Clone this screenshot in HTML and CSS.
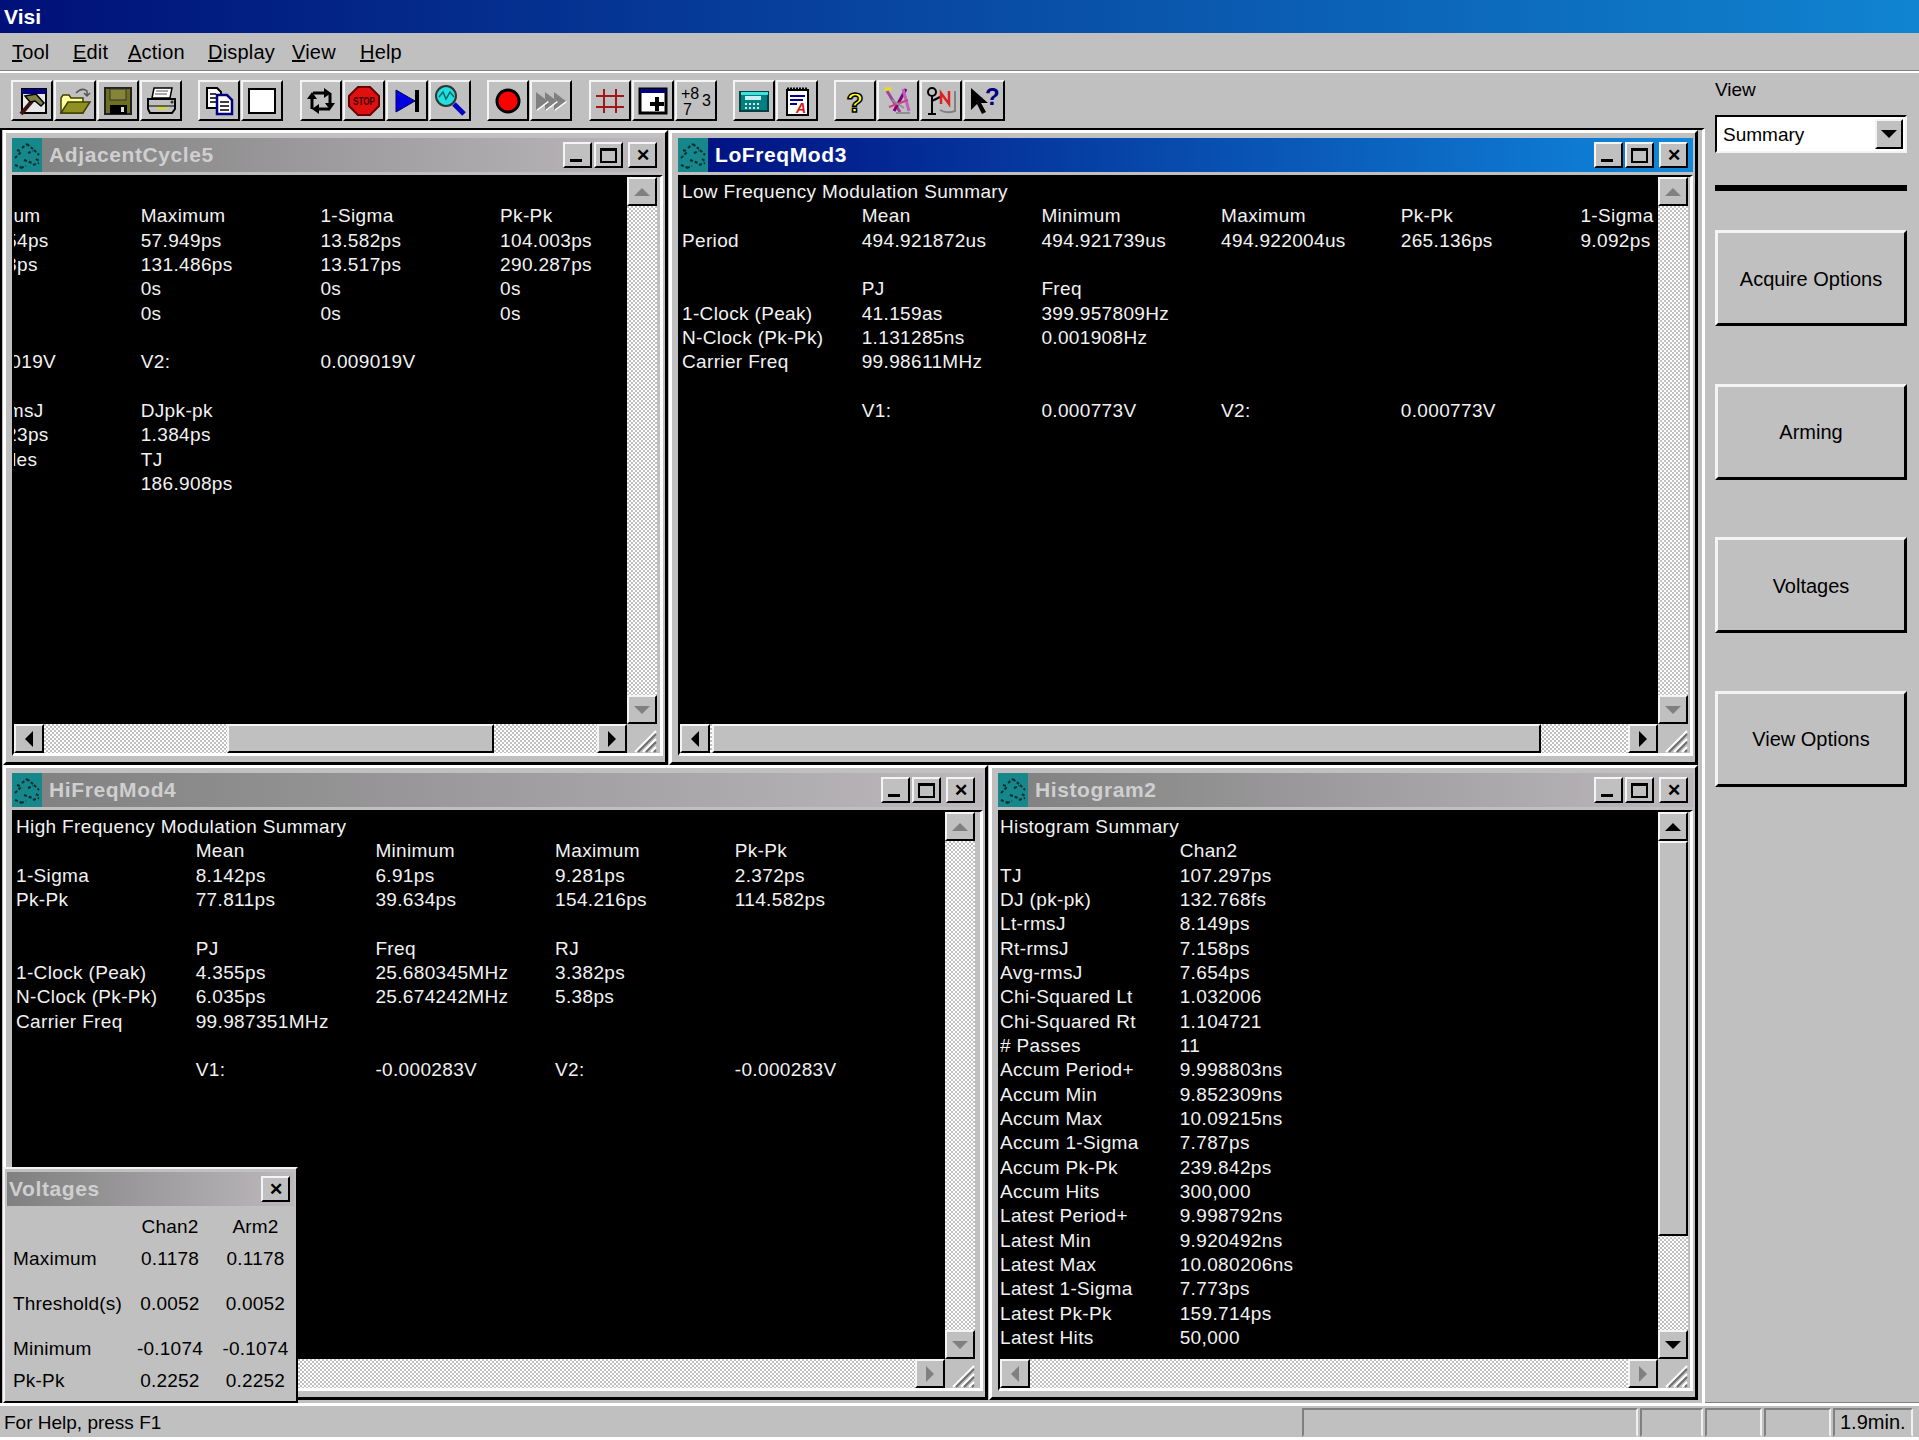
FILE: index.html
```html
<!DOCTYPE html>
<html lang="en">

<head>
    <meta charset="UTF-8">
    <title>Visi</title>
    <link rel="stylesheet" href="styles.css">
</head>

<body>
    <svg class="sprite">
        <symbol id="doc-icon" viewBox="0 0 30 34">
            <rect width="30" height="34" fill="#16878a"/>
            <path d="M3 20l6-6M10 10l5-4M15 6l6 5M22 12l5 5M3 27l7 3M12 22l8 3M21 27l6-2M5 12l3 1M16 15l5-2M24 21l3 2M9 30l5-2" stroke="#0a2c30" stroke-width="2" stroke-dasharray="3 2" fill="none"/>
        </symbol>
        <symbol id="grip" viewBox="0 0 30 29">
            <path d="M8 28L29 7M16 28L29 15M24 28L29 23" stroke="#fff" stroke-width="2"/>
            <path d="M11 28L29 10M19 28L29 18M27 28L29 26" stroke="#707070" stroke-width="2"/>
        </symbol>
    </svg>

    <div class="app">
        <div class="caption">Visi</div>

        <div class="menubar">
            <span class="menu-tool"><u>T</u>ool</span>
            <span class="menu-edit"><u>E</u>dit</span>
            <span class="menu-action"><u>A</u>ction</span>
            <span class="menu-display"><u>D</u>isplay</span>
            <span class="menu-view"><u>V</u>iew</span>
            <span class="menu-help"><u>H</u>elp</span>
        </div>

        <div class="workspace">
            <div class="left-col">
                <!-- toolbar -->
                <div class="toolbar">
                    <div class="tool-group">
                        <div class="tool-btn"><svg viewBox="0 0 32 30"><rect x="6" y="3" width="24" height="24" fill="#e8e8e8" stroke="#000" stroke-width="2"/><rect x="6" y="3" width="24" height="5" fill="#000080"/><path d="M17 14L5 28" stroke="#401010" stroke-width="4"/><path d="M9 10L20 8L28 17L25 20L19 15L14 16Z" fill="#808040" stroke="#000" stroke-width="1.5"/></svg></div>
                        <div class="tool-btn"><svg viewBox="0 0 32 30"><path d="M2 12V27H24V12H12L10 9H4Z" fill="#ffffa0" stroke="#404000" stroke-width="1.5"/><path d="M2 27L9 16H31L24 27Z" fill="#909020" stroke="#404000" stroke-width="1.5"/><path d="M17 7Q23 1 28 5V9M25 7L28 10L31 7" fill="none" stroke="#555" stroke-width="1.5"/></svg></div>
                        <div class="tool-btn"><svg viewBox="0 0 32 30"><path d="M3 2H29V28H3Z" fill="#6f6f20" stroke="#222" stroke-width="2"/><rect x="8" y="3" width="16" height="11" fill="#85853a" stroke="#333"/><rect x="8" y="19" width="17" height="9" fill="#000"/><rect x="19" y="21" width="3" height="5" fill="#ddd"/></svg></div>
                        <div class="tool-btn"><svg viewBox="0 0 32 30"><path d="M9 2H27L25 12H7Z" fill="#fff" stroke="#000" stroke-width="1.5"/><path d="M11 5H23M10 8H22" stroke="#555"/><path d="M3 13H30V23L27 27H5L3 23Z" fill="#c0c0c0" stroke="#000" stroke-width="2"/><path d="M4 20H29" stroke="#000"/><rect x="12" y="21" width="10" height="2" fill="#dd0"/><circle cx="27" cy="16" r="1.5" fill="#333"/></svg></div>
                    </div>
                    <div class="tool-group">
                        <div class="tool-btn"><svg viewBox="0 0 32 30"><path d="M4 2H14L18 6V22H4Z" fill="#fff" stroke="#000" stroke-width="2"/><path d="M7 8H13M7 12H13M7 16H13" stroke="#000" stroke-width="1.5"/><path d="M14 9H24L29 14V28H14Z" fill="#fff" stroke="#000080" stroke-width="2.5"/><path d="M17 16H26M17 20H26M17 24H26" stroke="#000" stroke-width="1.5"/></svg></div>
                        <div class="tool-btn"><svg viewBox="0 0 32 30"><rect x="3" y="3" width="26" height="24" fill="#fff" stroke="#000" stroke-width="2"/></svg></div>
                    </div>
                    <div class="tool-group">
                        <div class="tool-btn"><svg viewBox="0 0 32 30"><path d="M8 7H20M25 7V18M25 23H13M7 23V12" fill="none" stroke="#000" stroke-width="3"/><path d="M19 2L26 7L19 12ZM20 17L25 24L30 17ZM14 18L7 23L14 28ZM2 13L7 6L12 13Z"/></svg></div>
                        <div class="tool-btn"><svg viewBox="0 0 32 30"><polygon points="10,1 22,1 31,10 31,20 22,29 10,29 1,20 1,10" fill="#e01010" stroke="#600" stroke-width="2"/><text class="stop-label" x="16" y="19" textLength="22" lengthAdjust="spacingAndGlyphs">STOP</text></svg></div>
                        <div class="tool-btn"><svg viewBox="0 0 32 30"><polygon points="5,4 24,15 5,26" fill="#0000e0" stroke="#000060"/><rect x="24" y="4" width="4" height="22"/></svg></div>
                        <div class="tool-btn"><svg viewBox="0 0 32 30"><circle cx="12" cy="10" r="10" fill="#20e0e0" stroke="#333" stroke-width="2"/><path d="M5 11L9 6L12 13L16 6L20 11" fill="none" stroke="#066" stroke-width="1.5"/><path d="M20 18L30 28" stroke="#0000c0" stroke-width="5"/></svg></div>
                    </div>
                    <div class="tool-group">
                        <div class="tool-btn"><svg viewBox="0 0 32 30"><circle cx="16" cy="15" r="11" fill="#f00" stroke="#000" stroke-width="3"/></svg></div>
                        <div class="tool-btn"><svg viewBox="0 0 32 30"><path d="M20 7L32 16L20 25Z" fill="#fff"/><path d="M19 6L31 15L19 24Z" fill="#808080"/><path d="M11 7L23 16L11 25Z" fill="#fff"/><path d="M10 6L22 15L10 24Z" fill="#808080"/><path d="M2 7L14 16L2 25Z" fill="#fff"/><path d="M1 6L13 15L1 24Z" fill="#808080"/></svg></div>
                    </div>
                    <div class="tool-group">
                        <div class="tool-btn"><svg viewBox="0 0 32 30"><path d="M10 3V27M22 3V27M2 10H30M2 21H30" stroke="#a01818" stroke-width="2" fill="none"/></svg></div>
                        <div class="tool-btn"><svg viewBox="0 0 32 30"><rect x="3" y="3" width="26" height="24" fill="#fff" stroke="#000" stroke-width="3"/><rect x="3" y="3" width="26" height="4" fill="#000080"/><path d="M13 16H27V20H22V25H18V20H13ZM18 11H22V16H18Z"/></svg></div>
                        <div class="tool-btn"><svg viewBox="0 0 32 30"><text class="num-label" x="1" y="13">+8</text><text class="num-label" x="22" y="20">3</text><text class="num-label" x="3" y="29">7</text></svg></div>
                    </div>
                    <div class="tool-group">
                        <div class="tool-btn"><svg viewBox="0 0 32 30"><rect x="2" y="6" width="28" height="19" fill="#008080" stroke="#004040" stroke-width="2"/><path d="M3 6H30V9H3Z" fill="#40e0e0"/><rect x="7" y="10" width="16" height="4" fill="#c8f0f0"/><path d="M7 18H23M7 22H23" stroke="#e0e0e0" stroke-width="2" stroke-dasharray="2 2"/></svg></div>
                        <div class="tool-btn"><svg viewBox="0 0 32 30"><rect x="6" y="4" width="21" height="25" fill="#fff" stroke="#000" stroke-width="2"/><path d="M6 3H27" stroke="#000" stroke-width="3" stroke-dasharray="2 1"/><path d="M9 10H24M9 14H22M9 18H16" stroke="#000090" stroke-width="2"/><text class="note-label" x="15" y="27">A</text></svg></div>
                    </div>
                    <div class="tool-group">
                        <div class="tool-btn"><svg viewBox="0 0 32 30"><text class="help-label" x="16" y="26">?</text></svg></div>
                        <div class="tool-btn"><svg viewBox="0 0 32 30"><path d="M5 5L18 26" stroke="#a040a0" stroke-width="3"/><path d="M24 3L12 25" stroke="#800080" stroke-width="3"/><path d="M21 3L27 25" stroke="#c060c0" stroke-width="3"/><path d="M3 3H9" stroke="#f0e000" stroke-width="3"/><path d="M7 21L26 14" stroke="#d04080" stroke-width="2"/><path d="M10 14L22 22M14 27H28" stroke="#909090" stroke-width="2"/></svg></div>
                        <div class="tool-btn"><svg viewBox="0 0 32 30"><circle cx="7" cy="6" r="4" fill="none" stroke="#000" stroke-width="2"/><path d="M7 10V28M3 28H11M7 15L15 11" fill="none" stroke="#000" stroke-width="2"/><path d="M15 24Q21 28 30 25V5" fill="none" stroke="#808080" stroke-width="2"/><path d="M16 18V7L24 18V5" fill="none" stroke="#e02020" stroke-width="2.5"/></svg></div>
                        <div class="tool-btn"><svg viewBox="0 0 32 30"><polygon points="3,2 3,24 9,18 14,28 18,26 13,17 20,17"/><text class="what-label" x="17" y="19">?</text></svg></div>
                    </div>
                </div>

                <!-- MDI desktop -->
                <div class="mdi">
                    <div class="win win-adjacent">
                        <div class="title-bar inactive">
                            <svg class="title-icon"><use href="#doc-icon"/></svg>
                            <span class="title-text">AdjacentCycle5</span>
                            <div class="win-btn"><i class="glyph-min"></i></div>
                            <div class="win-btn"><i class="glyph-max"></i></div>
                            <div class="win-btn close">&#10005;</div>
                        </div>
                        <div class="client">
                            <div class="pane">
                                <div class="sheet scrolled">
                                    <div class="row"></div>
                                    <div class="row"><span>Minimum</span><span>Maximum</span><span>1-Sigma</span><span>Pk-Pk</span></div>
                                    <div class="row"><span>-46.054ps</span><span>57.949ps</span><span>13.582ps</span><span>104.003ps</span></div>
                                    <div class="row"><span>-158.8ps</span><span>131.486ps</span><span>13.517ps</span><span>290.287ps</span></div>
                                    <div class="row"><span></span><span>0s</span><span>0s</span><span>0s</span></div>
                                    <div class="row"><span></span><span>0s</span><span>0s</span><span>0s</span></div>
                                    <div class="row"></div>
                                    <div class="row"><span>0.009019V</span><span>V2:</span><span>0.009019V</span></div>
                                    <div class="row"></div>
                                    <div class="row"><span>Avg-rmsJ</span><span>DJpk-pk</span></div>
                                    <div class="row"><span>-10.623ps</span><span>1.384ps</span></div>
                                    <div class="row"><span>Samples</span><span>TJ</span></div>
                                    <div class="row"><span></span><span>186.908ps</span></div>
                                </div>
                            </div>
                            <div class="vscroll">
                                <div class="sb-btn"><i class="arr-up off"></i></div>
                                <div class="track"></div>
                                <div class="sb-btn"><i class="arr-down off"></i></div>
                            </div>
                            <div class="hscroll">
                                <div class="sb-btn"><i class="arr-left"></i></div>
                                <div class="track"><div class="thumb thumb-adjacent"></div></div>
                                <div class="sb-btn"><i class="arr-right"></i></div>
                            </div>
                            <div class="corner"><svg><use href="#grip"/></svg></div>
                        </div>
                    </div>

                    <div class="win win-lofreq">
                        <div class="title-bar">
                            <svg class="title-icon"><use href="#doc-icon"/></svg>
                            <span class="title-text">LoFreqMod3</span>
                            <div class="win-btn"><i class="glyph-min"></i></div>
                            <div class="win-btn"><i class="glyph-max"></i></div>
                            <div class="win-btn close">&#10005;</div>
                        </div>
                        <div class="client">
                            <div class="pane">
                                <div class="sheet">
                                    <div class="row"><span>Low Frequency Modulation Summary</span></div>
                                    <div class="row"><span></span><span>Mean</span><span>Minimum</span><span>Maximum</span><span>Pk-Pk</span><span>1-Sigma</span></div>
                                    <div class="row"><span>Period</span><span>494.921872us</span><span>494.921739us</span><span>494.922004us</span><span>265.136ps</span><span>9.092ps</span></div>
                                    <div class="row"></div>
                                    <div class="row"><span></span><span>PJ</span><span>Freq</span></div>
                                    <div class="row"><span>1-Clock (Peak)</span><span>41.159as</span><span>399.957809Hz</span></div>
                                    <div class="row"><span>N-Clock (Pk-Pk)</span><span>1.131285ns</span><span>0.001908Hz</span></div>
                                    <div class="row"><span>Carrier Freq</span><span>99.98611MHz</span></div>
                                    <div class="row"></div>
                                    <div class="row"><span></span><span>V1:</span><span>0.000773V</span><span>V2:</span><span>0.000773V</span></div>
                                </div>
                            </div>
                            <div class="vscroll">
                                <div class="sb-btn"><i class="arr-up off"></i></div>
                                <div class="track"></div>
                                <div class="sb-btn"><i class="arr-down off"></i></div>
                            </div>
                            <div class="hscroll">
                                <div class="sb-btn"><i class="arr-left"></i></div>
                                <div class="track"><div class="thumb thumb-lofreq"></div></div>
                                <div class="sb-btn"><i class="arr-right"></i></div>
                            </div>
                            <div class="corner"><svg><use href="#grip"/></svg></div>
                        </div>
                    </div>

                    <div class="win win-hifreq">
                        <div class="title-bar inactive">
                            <svg class="title-icon"><use href="#doc-icon"/></svg>
                            <span class="title-text">HiFreqMod4</span>
                            <div class="win-btn"><i class="glyph-min"></i></div>
                            <div class="win-btn"><i class="glyph-max"></i></div>
                            <div class="win-btn close">&#10005;</div>
                        </div>
                        <div class="client">
                            <div class="pane">
                                <div class="sheet">
                                    <div class="row"><span>High Frequency Modulation Summary</span></div>
                                    <div class="row"><span></span><span>Mean</span><span>Minimum</span><span>Maximum</span><span>Pk-Pk</span></div>
                                    <div class="row"><span>1-Sigma</span><span>8.142ps</span><span>6.91ps</span><span>9.281ps</span><span>2.372ps</span></div>
                                    <div class="row"><span>Pk-Pk</span><span>77.811ps</span><span>39.634ps</span><span>154.216ps</span><span>114.582ps</span></div>
                                    <div class="row"></div>
                                    <div class="row"><span></span><span>PJ</span><span>Freq</span><span>RJ</span></div>
                                    <div class="row"><span>1-Clock (Peak)</span><span>4.355ps</span><span>25.680345MHz</span><span>3.382ps</span></div>
                                    <div class="row"><span>N-Clock (Pk-Pk)</span><span>6.035ps</span><span>25.674242MHz</span><span>5.38ps</span></div>
                                    <div class="row"><span>Carrier Freq</span><span>99.987351MHz</span></div>
                                    <div class="row"></div>
                                    <div class="row"><span></span><span>V1:</span><span>-0.000283V</span><span>V2:</span><span>-0.000283V</span></div>
                                </div>
                            </div>
                            <div class="vscroll">
                                <div class="sb-btn"><i class="arr-up off"></i></div>
                                <div class="track"></div>
                                <div class="sb-btn"><i class="arr-down off"></i></div>
                            </div>
                            <div class="hscroll">
                                <div class="track"></div>
                                <div class="sb-btn"><i class="arr-right off"></i></div>
                            </div>
                            <div class="corner"><svg><use href="#grip"/></svg></div>
                        </div>
                    </div>

                    <div class="win win-histogram">
                        <div class="title-bar inactive">
                            <svg class="title-icon"><use href="#doc-icon"/></svg>
                            <span class="title-text">Histogram2</span>
                            <div class="win-btn"><i class="glyph-min"></i></div>
                            <div class="win-btn"><i class="glyph-max"></i></div>
                            <div class="win-btn close">&#10005;</div>
                        </div>
                        <div class="client">
                            <div class="pane">
                                <div class="sheet">
                                    <div class="row"><span>Histogram Summary</span></div>
                                    <div class="row"><span></span><span>Chan2</span></div>
                                    <div class="row"><span>TJ</span><span>107.297ps</span></div>
                                    <div class="row"><span>DJ (pk-pk)</span><span>132.768fs</span></div>
                                    <div class="row"><span>Lt-rmsJ</span><span>8.149ps</span></div>
                                    <div class="row"><span>Rt-rmsJ</span><span>7.158ps</span></div>
                                    <div class="row"><span>Avg-rmsJ</span><span>7.654ps</span></div>
                                    <div class="row"><span>Chi-Squared Lt</span><span>1.032006</span></div>
                                    <div class="row"><span>Chi-Squared Rt</span><span>1.104721</span></div>
                                    <div class="row"><span># Passes</span><span>11</span></div>
                                    <div class="row"><span>Accum Period+</span><span>9.998803ns</span></div>
                                    <div class="row"><span>Accum Min</span><span>9.852309ns</span></div>
                                    <div class="row"><span>Accum Max</span><span>10.09215ns</span></div>
                                    <div class="row"><span>Accum 1-Sigma</span><span>7.787ps</span></div>
                                    <div class="row"><span>Accum Pk-Pk</span><span>239.842ps</span></div>
                                    <div class="row"><span>Accum Hits</span><span>300,000</span></div>
                                    <div class="row"><span>Latest Period+</span><span>9.998792ns</span></div>
                                    <div class="row"><span>Latest Min</span><span>9.920492ns</span></div>
                                    <div class="row"><span>Latest Max</span><span>10.080206ns</span></div>
                                    <div class="row"><span>Latest 1-Sigma</span><span>7.773ps</span></div>
                                    <div class="row"><span>Latest Pk-Pk</span><span>159.714ps</span></div>
                                    <div class="row"><span>Latest Hits</span><span>50,000</span></div>
                                </div>
                            </div>
                            <div class="vscroll">
                                <div class="sb-btn"><i class="arr-up"></i></div>
                                <div class="track"><div class="thumb thumb-histogram"></div></div>
                                <div class="sb-btn"><i class="arr-down"></i></div>
                            </div>
                            <div class="hscroll">
                                <div class="sb-btn"><i class="arr-left off"></i></div>
                                <div class="track"></div>
                                <div class="sb-btn"><i class="arr-right off"></i></div>
                            </div>
                            <div class="corner"><svg><use href="#grip"/></svg></div>
                        </div>
                    </div>

                    <!-- floating voltages palette -->
                    <div class="palette">
                        <div class="title-bar inactive palette-title">
                            <span class="title-text">Voltages</span>
                            <div class="win-btn close">&#10005;</div>
                        </div>
                        <div class="volt-grid">
                            <span></span><span class="volt-val">Chan2</span><span class="volt-val">Arm2</span>
                            <span>Maximum</span><span class="volt-val">0.1178</span><span class="volt-val">0.1178</span>
                            <span>Threshold(s)</span><span class="volt-val">0.0052</span><span class="volt-val">0.0052</span>
                            <span>Minimum</span><span class="volt-val">-0.1074</span><span class="volt-val">-0.1074</span>
                            <span>Pk-Pk</span><span class="volt-val">0.2252</span><span class="volt-val">0.2252</span>
                        </div>
                    </div>
                </div>
            </div>

            <!-- right side panel -->
            <div class="side">
                <div class="side-label">View</div>
                <div class="combo">
                    <span class="combo-text">Summary</span>
                    <div class="combo-btn"><i class="arr-down"></i></div>
                </div>
                <div class="side-rule"></div>
                <div class="side-btn">Acquire Options</div>
                <div class="side-btn">Arming</div>
                <div class="side-btn">Voltages</div>
                <div class="side-btn">View Options</div>
            </div>
        </div>

        <div class="status">
            <span class="status-text">For Help, press F1</span>
            <div class="status-cell cell-a"></div>
            <div class="status-cell cell-b"></div>
            <div class="status-cell cell-c"></div>
            <div class="status-cell cell-d"></div>
            <div class="status-cell cell-e">1.9min.</div>
        </div>
    </div>
</body>

</html>
```

FILE: styles.css
```css
/* base */
* {
    box-sizing: border-box;
}

body {
    margin: 0;
    background: #c0c0c0;
    font-family: "Liberation Sans", Arial, sans-serif;
    font-size: 19px;
    color: #000;
}

.sprite {
    position: absolute;
    width: 0;
    height: 0;
}

.app {
    width: 1919px;
    height: 1440px;
    display: flex;
    flex-direction: column;
    overflow: hidden;
}

/* caption + menu */
.caption {
    height: 33px;
    padding-left: 4px;
    line-height: 33px;
    font-size: 21px;
    font-weight: bold;
    color: #fff;
    background: linear-gradient(90deg, #001078, #1084d0);
}

.menubar {
    height: 40px;
    display: flex;
    align-items: center;
    font-size: 20px;
    letter-spacing: 0.2px;
    padding: 1px 0 0 12px;
    border-bottom: 2px solid #fff;
    box-shadow: inset 0 -1px 0 #808080;
}

.menu-tool { width: 61px; }
.menu-edit { width: 55px; }
.menu-action { width: 80px; }
.menu-display { width: 84px; }
.menu-view { width: 68px; }

.workspace {
    flex: 1;
    display: flex;
    min-height: 0;
}

.left-col {
    width: 1705px;
    display: flex;
    flex-direction: column;
}

/* toolbar */
.toolbar {
    height: 55px;
    display: flex;
    gap: 16.4px;
    padding: 7px 0 0 11px;
}

.tool-group {
    display: flex;
    gap: 1px;
}

.tool-btn {
    width: 42px;
    height: 41px;
    display: flex;
    align-items: center;
    justify-content: center;
    border: 2px solid;
    border-color: #f4f4f4 #000 #000 #f4f4f4;
}

.tool-btn svg {
    width: 32px;
    height: 30px;
    overflow: visible;
}

.tool-btn text {
    font-family: "Liberation Sans", sans-serif;
}

.stop-label {
    font-size: 10px;
    font-weight: bold;
    text-anchor: middle;
    fill: #300;
}

.num-label {
    font-size: 16px;
}

.note-label {
    font-size: 14px;
    font-weight: bold;
    font-style: italic;
    fill: #e01010;
}

.help-label {
    font-size: 28px;
    font-weight: bold;
    text-anchor: middle;
    fill: #ffff20;
    stroke: #000;
    stroke-width: 1.5px;
}

.what-label {
    font-size: 24px;
    font-weight: bold;
    fill: #000080;
}

/* MDI */
.mdi {
    position: relative;
    flex: 1;
    background: #c0c0c0;
    border-top: 2px solid #000;
    border-left: 2px solid #000;
    border-right: 3px solid #fff;
}

.win {
    position: absolute;
    display: flex;
    flex-direction: column;
    background: #c0c0c0;
    border: 3px solid;
    border-color: #fff #000 #000 #fff;
    padding: 5px 2px 6px 6px;
}

.win-adjacent { left: 1px; top: 0; width: 665px; height: 635px; }
.win-lofreq { left: 667px; top: 0; width: 1029px; height: 635px; }
.win-hifreq { left: 1px; top: 635px; width: 985px; height: 635px; }
.win-histogram { left: 987px; top: 635px; width: 709px; height: 635px; }

.title-bar {
    height: 34px;
    margin-bottom: 3px;
    display: flex;
    align-items: center;
    padding-right: 5px;
    gap: 2px;
    color: #fff;
    background: linear-gradient(90deg, #000f80, #1088dc);
}

.title-bar.inactive {
    color: #cfcfcf;
    background: linear-gradient(90deg, #808080, #bcb8bc);
}

.win-adjacent .title-bar { padding-right: 6px; }
.win-hifreq .title-bar { padding-right: 8px; }

.title-icon {
    width: 30px;
    height: 34px;
    flex: none;
}

.title-text {
    flex: 1;
    padding-left: 5px;
    font-size: 21px;
    font-weight: bold;
    letter-spacing: 0.6px;
    white-space: nowrap;
}

.win-btn {
    width: 29px;
    height: 26px;
    flex: none;
    display: flex;
    align-items: center;
    justify-content: center;
    background: #c0c0c0;
    color: #000;
    border: 2px solid;
    border-color: #f4f4f4 #000 #000 #f4f4f4;
    font-size: 17px;
    font-weight: bold;
    line-height: 1;
}

.win-btn.close {
    margin-left: 3px;
}

.glyph-min {
    width: 12px;
    height: 3px;
    background: #000;
    margin-top: 11px;
    margin-right: 4px;
}

.glyph-max {
    width: 17px;
    height: 15px;
    border: 2px solid #000;
    border-top-width: 3px;
}

.client {
    flex: 1;
    min-height: 0;
    display: grid;
    grid-template-columns: minmax(0, 1fr) 30px;
    grid-template-rows: minmax(0, 1fr) 29px;
    border: 2px solid;
    border-color: #000 #fff #fff #000;
    border-right-width: 3px;
    border-bottom-width: 3px;
    padding-right: 2px;
}

.win-adjacent .client { padding-right: 3px; }
.win-hifreq .client { padding-right: 5px; }

.pane {
    background: #000;
    overflow: hidden;
    color: #f2f2f2;
    padding: 3px 0 0 2px;
    letter-spacing: 0.35px;
}

.win-histogram .pane {
    padding-left: 0;
}

.sheet.scrolled {
    margin-left: -55px;
}

.row {
    height: 24.33px;
    line-height: 24.33px;
    display: grid;
    grid-template-columns: repeat(6, 179.7px);
    white-space: nowrap;
}

/* scrollbars */
.vscroll {
    display: flex;
    flex-direction: column;
}

.hscroll {
    display: flex;
}

.track {
    flex: 1;
    min-width: 0;
    background: conic-gradient(#fff 25%, #c0c0c0 0 50%, #fff 0 75%, #c0c0c0 0) 0 0 / 4px 4px;
}

.sb-btn {
    flex: none;
    width: 30px;
    height: 29px;
    display: flex;
    align-items: center;
    justify-content: center;
    background: #c0c0c0;
    border: 2px solid;
    border-color: #f4f4f4 #000 #000 #f4f4f4;
}

.thumb {
    background: #c0c0c0;
    border: 2px solid;
    border-color: #f4f4f4 #000 #000 #f4f4f4;
}

.thumb-adjacent { width: 267px; height: 29px; margin-left: 183px; }
.thumb-lofreq { width: 829px; height: 29px; margin-left: 2px; }
.thumb-histogram { width: 30px; height: 395px; }

.arr-up, .arr-down, .arr-left, .arr-right {
    display: block;
    width: 0;
    height: 0;
    border: 0 solid transparent;
}

.arr-up { border-width: 0 8px 8px; border-bottom-color: #000; }
.arr-down { border-width: 8px 8px 0; border-top-color: #000; }
.arr-left { border-width: 8px 8px 8px 0; border-right-color: #000; }
.arr-right { border-width: 8px 0 8px 8px; border-left-color: #000; }

.arr-up.off { border-bottom-color: #808080; }
.arr-down.off { border-top-color: #808080; }
.arr-left.off { border-right-color: #808080; }
.arr-right.off { border-left-color: #808080; }

.corner {
    background: #c0c0c0;
    overflow: hidden;
}

.corner svg {
    display: block;
    width: 30px;
    height: 29px;
}

/* voltages palette */
.palette {
    position: absolute;
    left: 1px;
    top: 1037px;
    width: 295px;
    height: 236px;
    padding: 3px 2px;
    background: #c0c0c0;
    border: 2px solid;
    border-color: #f4f4f4 #000 #000 #f4f4f4;
}

.palette-title {
    margin-bottom: 0;
    padding-right: 4px;
}

.palette-title .title-text {
    padding-left: 2px;
}

.volt-grid {
    display: grid;
    grid-template-columns: 114px 86px 85px;
    grid-template-rows: 32px 45px 45px 32px 32px;
    align-items: start;
    padding: 10px 0 0 6px;
    letter-spacing: 0.2px;
}

.volt-val {
    text-align: center;
}

/* right side */
.side {
    flex: 1;
    padding: 5px 12px 0 10px;
    border-bottom: 1px solid #808080;
}

.side-label {
    height: 24px;
    line-height: 24px;
    font-size: 19px;
    margin-bottom: 13px;
}

.combo {
    height: 38px;
    display: flex;
    align-items: center;
    justify-content: space-between;
    padding-right: 2px;
    background: #fff;
    border: 2px solid;
    border-color: #000 #f4f4f4 #f4f4f4 #000;
}

.combo-text {
    padding: 2px 0 0 6px;
}

.combo-btn {
    width: 28px;
    height: 30px;
    display: flex;
    align-items: center;
    justify-content: center;
    background: #c0c0c0;
    border: 2px solid;
    border-color: #f4f4f4 #000 #000 #f4f4f4;
}

.side-rule {
    height: 6px;
    background: #000;
    margin: 32px 0 39px;
}

.side-btn {
    height: 96px;
    margin-bottom: 57.5px;
    padding-top: 2px;
    display: flex;
    align-items: center;
    justify-content: center;
    font-size: 20px;
    border: 3px solid;
    border-color: #f4f4f4 #000 #000 #f4f4f4;
}

/* status bar */
.status {
    height: 37px;
    flex: none;
    display: flex;
    align-items: stretch;
    border-top: 3px solid #fff;
    border-bottom: 3px solid #fff;
    padding-top: 2px;
    padding-right: 4px;
}

.status-text {
    width: 1302px;
    padding-left: 4px;
    line-height: 29px;
}

.status-cell {
    margin-right: 2px;
    padding-left: 5px;
    line-height: 29px;
    font-size: 20px;
    border: 2px solid;
    border-color: #808080 #f0f0f0 #c0c0c0 #808080;
}

.cell-a { width: 336px; }
.cell-b { width: 63px; }
.cell-c { width: 57px; }
.cell-d { width: 67px; }
.cell-e { width: 80px; margin-right: 0; line-height: 25px; }
```
